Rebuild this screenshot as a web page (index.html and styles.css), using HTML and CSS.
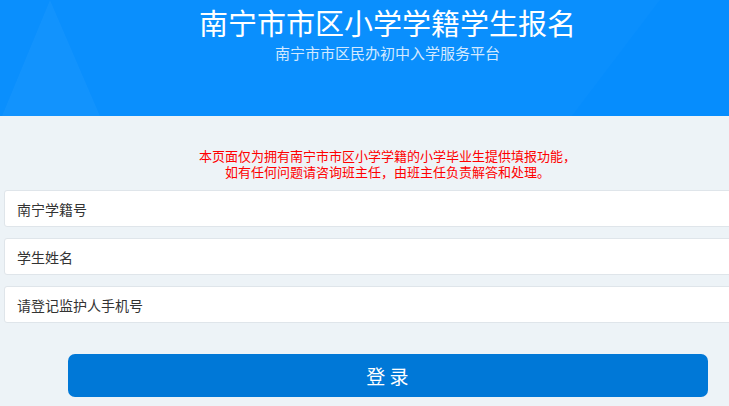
FILE: index.html
```html
<!DOCTYPE html>
<html>
<head>
  <meta charset="UTF-8">
  <title>南宁市市区小学学籍学生报名</title>
  <link rel="stylesheet" href="styles.css">
</head>
<body>
  <div class="page">
    <div class="header">
      <svg class="header_bg" viewBox="0 0 775 116" preserveAspectRatio="none">
        <polygon points="50,0 2,116 100,116" fill="#ffffff" fill-opacity="0.035"/>
        <polygon points="0,0 660,0 572,116 0,116" fill="#ffffff" fill-opacity="0.02"/>
      </svg>
      <h1 class="title">南宁市市区小学学籍学生报名</h1>
      <p class="subtitle">南宁市市区民办初中入学服务平台</p>
    </div>
    <div class="content">
      <p class="notice">本页面仅为拥有南宁市市区小学学籍的小学毕业生提供填报功能，<br>如有任何问题请咨询班主任，由班主任负责解答和处理。</p>
      <form class="login_form">
        <input class="field" type="text" placeholder="南宁学籍号">
        <input class="field" type="text" placeholder="学生姓名">
        <input class="field" type="text" placeholder="请登记监护人手机号">
        <div class="controller">
          <button class="login_button" type="button">登 录</button>
        </div>
      </form>
    </div>
  </div>
</body>
</html>
```

FILE: styles.css
```css
html, body {
  margin: 0;
  padding: 0;
  background: #edf3f7;
  overflow: hidden;
}
body {
  font-family: "Noto Sans CJK SC", "Noto Sans", sans-serif;
}
.page {
  width: 775px;
}
.header {
  position: relative;
  height: 116px;
  background: #068dfd;
  text-align: center;
  color: #fff;
  overflow: hidden;
}
.header_bg {
  position: absolute;
  top: 0;
  left: 0;
  width: 100%;
  height: 100%;
}
.title {
  position: relative;
  margin: 0;
  padding-top: 4px;
  font-size: 29px;
  font-weight: normal;
  line-height: 36px;
}
.subtitle {
  position: relative;
  margin: 3px 0 0;
  font-size: 15px;
  line-height: 20px;
  color: #d3e9ff;
}
.content {
  padding: 32px 4px 0;
}
.notice {
  margin: 0 0 10px;
  font-size: 13px;
  line-height: 16px;
  color: #ff0000;
  text-align: center;
}
.login_form {
  display: flex;
  flex-direction: column;
}
.field {
  box-sizing: border-box;
  height: 37px;
  margin-bottom: 11px;
  padding: 0 12px;
  font-family: inherit;
  font-size: 14px;
  color: #333;
  background: #fff;
  border: 1px solid #dfe5ea;
  border-radius: 3px;
  outline: none;
}
.field::placeholder {
  color: #333;
}
.controller {
  display: flex;
  justify-content: center;
  margin-top: 20px;
}
.login_button {
  width: 640px;
  height: 43px;
  font-family: inherit;
  font-size: 19px;
  color: #fff;
  background: #0078d7;
  border: none;
  border-radius: 7px;
  cursor: pointer;
}
```
